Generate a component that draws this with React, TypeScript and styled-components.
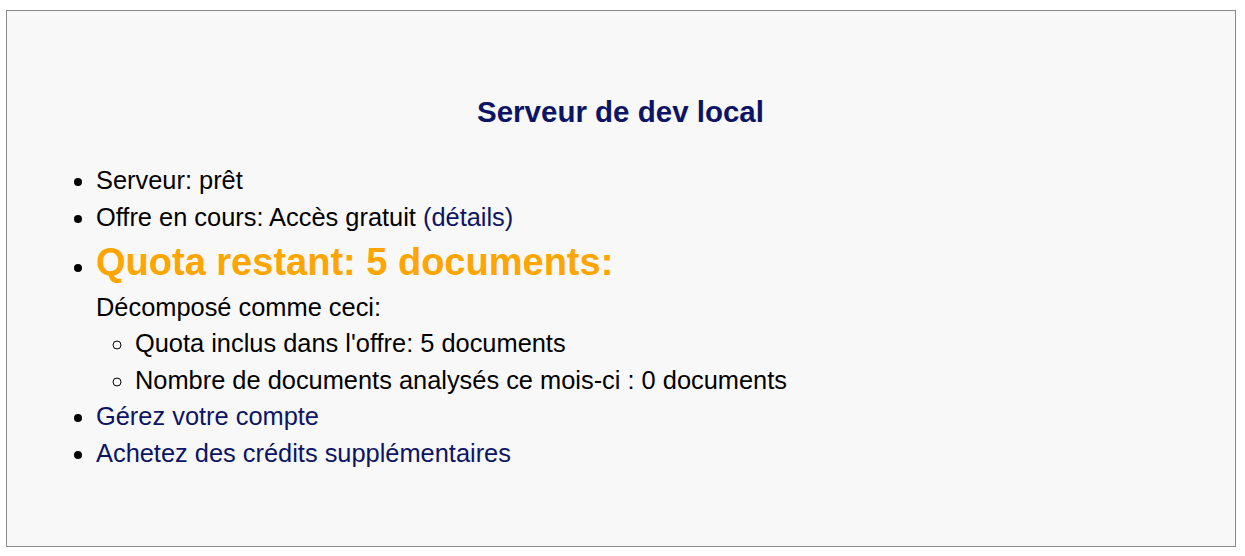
import React from "react";
import styled, { createGlobalStyle } from "styled-components";

const GlobalStyle = createGlobalStyle`
  html, body {
    margin: 0;
    padding: 0;
    background: #ffffff;
  }
  body {
    font-family: "Liberation Sans", Arial, sans-serif;
  }
`;

const Panel = styled.div`
  box-sizing: border-box;
  width: 1230px;
  height: 537px;
  margin: 10px 0 0 6px;
  border: 1px solid #8a8a8a;
  background: #f8f8f8;
  padding: 84px 40px 0 39px;
`;

const Title = styled.h2`
  margin: 0 0 33px 0;
  text-align: center;
  font-size: 29.5px;
  line-height: 34px;
  font-weight: bold;
  color: #0c1466;
`;

const List = styled.ul`
  margin: 0;
  padding-left: 50px;
  font-size: 25.4px;
  line-height: 36.5px;
  color: #000000;
  list-style: disc;
`;

const SubList = styled.ul`
  margin: 0;
  padding-left: 39px;
  list-style: circle;
`;

const Item = styled.li``;

const Link = styled.a`
  color: #0c1466;
  text-decoration: none;
`;

const Quota = styled.span`
  display: inline-block;
  font-size: 38px;
  line-height: 54px;
  font-weight: bold;
  color: #ffa500;
`;

const Breakdown = styled.div`
  line-height: 36px;
`;

export default function App() {
  return (
    <>
      <GlobalStyle />
      <Panel>
        <Title>Serveur de dev local</Title>
        <List>
          <Item>Serveur: prêt</Item>
          <Item>
            Offre en cours: Accès gratuit <Link href="#">(détails)</Link>
          </Item>
          <Item>
            <Quota>Quota restant: 5 documents:</Quota>
            <Breakdown>Décomposé comme ceci:</Breakdown>
            <SubList>
              <Item>Quota inclus dans l'offre: 5 documents</Item>
              <Item>Nombre de documents analysés ce mois-ci : 0 documents</Item>
            </SubList>
          </Item>
          <Item>
            <Link href="#">Gérez votre compte</Link>
          </Item>
          <Item>
            <Link href="#">Achetez des crédits supplémentaires</Link>
          </Item>
        </List>
      </Panel>
    </>
  );
}
